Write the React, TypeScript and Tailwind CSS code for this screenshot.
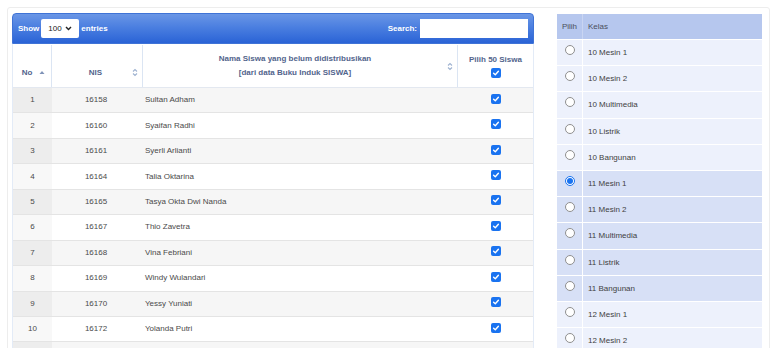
import React from "react";

const students: [number, string, string][] = [
  [1, "16158", "Sultan Adham"],
  [2, "16160", "Syaifan Radhi"],
  [3, "16161", "Syerli Arlianti"],
  [4, "16164", "Talia Oktarina"],
  [5, "16165", "Tasya Okta Dwi Nanda"],
  [6, "16167", "Thio Zavetra"],
  [7, "16168", "Vina Febriani"],
  [8, "16169", "Windy Wulandari"],
  [9, "16170", "Yessy Yuniati"],
  [10, "16172", "Yolanda Putri"],
];

const kelas: [string, boolean, boolean][] = [
  ["10 Mesin 1", false, false],
  ["10 Mesin 2", false, false],
  ["10 Multimedia", false, false],
  ["10 Listrik", false, false],
  ["10 Bangunan", false, false],
  ["11 Mesin 1", true, true],
  ["11 Mesin 2", false, true],
  ["11 Multimedia", false, true],
  ["11 Listrik", false, true],
  ["11 Bangunan", false, true],
  ["12 Mesin 1", false, false],
  ["12 Mesin 2", false, false],
];

function SortBoth() {
  return (
    <svg width="6" height="9" viewBox="0 0 6 9" className="shrink-0">
      <path d="M1 3.5 L3 1.5 L5 3.5" fill="none" stroke="#9fb3d1" strokeWidth="1.1" />
      <path d="M1 5.5 L3 7.5 L5 5.5" fill="none" stroke="#9fb3d1" strokeWidth="1.1" />
    </svg>
  );
}

function SortAsc() {
  return (
    <svg width="6" height="5" viewBox="0 0 6 5" className="shrink-0">
      <path d="M0.5 4 L3 1 L5.5 4 Z" fill="#7f93b8" />
    </svg>
  );
}

function Check() {
  return (
    <span className="inline-flex h-[10px] w-[10px] items-center justify-center rounded-[2px] bg-[#1a73f0]">
      <svg width="8" height="8" viewBox="0 0 8 8">
        <path d="M1.6 4.2 L3.3 5.8 L6.4 2.2" fill="none" stroke="white" strokeWidth="1.4" strokeLinecap="round" strokeLinejoin="round" />
      </svg>
    </span>
  );
}

function Radio({ on }: { on: boolean }) {
  return on ? (
    <span className="inline-flex h-[10px] w-[10px] items-center justify-center rounded-full border border-[#1a73f0] bg-white">
      <span className="h-[6px] w-[6px] rounded-full bg-[#1a73f0]" />
    </span>
  ) : (
    <span className="inline-block h-[10px] w-[10px] rounded-full border border-[#8f8f8f] bg-white" />
  );
}

export default function App() {
  return (
    <div className="h-[348px] w-[773px] overflow-hidden bg-white font-['Liberation_Sans',Arial,sans-serif] text-[8px]">
      <div className="ml-[7px] mt-[7px] flex w-[763px] items-start gap-[23px] rounded-t-[3px] border border-[#ededed] pl-[4px] pt-[5px] pb-[10px]">
        {/* Left table */}
        <div className="flex w-[522px] shrink-0 flex-col">
          <div className="flex h-[31px] shrink-0 items-center justify-between rounded-t-[4px] border border-[#3f73d6] bg-[linear-gradient(#6a96e6,#4b7fe0_45%,#2a63d6)] px-[5px] text-white">
            <div className="flex items-center gap-[2px] font-bold">
              <span>Show</span>
              <div className="flex h-[19px] w-[38px] items-center justify-between rounded-[2px] bg-white px-[7px] text-[8px] font-normal text-[#222]">
                <span>100</span>
                <svg width="7" height="5" viewBox="0 0 7 5">
                  <path d="M1 1 L3.5 3.6 L6 1" fill="none" stroke="#222" strokeWidth="1.4" />
                </svg>
              </div>
              <span>entries</span>
            </div>
            <div className="flex items-center gap-[3px] font-bold">
              <span>Search:</span>
              <div className="h-[19px] w-[108px] bg-white" />
            </div>
          </div>
          <div className="shrink-0 border-x border-[#e3ebf7]">
            {/* header */}
            <div className="flex h-[44px] border-b border-[#e3e8f0] pt-[1px] font-bold text-[#52648c]">
              <div className="flex w-[39px] items-center justify-center gap-[7px] border-r border-[#dbe5f3] pt-[13px] pl-[3px]">
                <span>No</span>
                <SortAsc />
              </div>
              <div className="flex w-[91px] items-center justify-end border-r border-[#dbe5f3] pt-[13px] pr-[4px]">
                <span className="mr-[30px]">NIS</span>
                <SortBoth />
              </div>
              <div className="flex w-[315px] items-center border-r border-[#dbe5f3] pr-[4px]">
                <div className="flex flex-1 flex-col items-center gap-[4px] leading-[10px]">
                  <span>Nama Siswa yang belum didistribusikan</span>
                  <span>[dari data Buku Induk SISWA]</span>
                </div>
                <SortBoth />
              </div>
              <div className="flex flex-1 flex-col items-center justify-center gap-[3px] leading-[10px]">
                <span>Pilih 50 Siswa</span>
                <Check />
              </div>
            </div>
            {/* rows */}
            {students.map(([no, nis, name], i) => {
              const odd = i % 2 === 0;
              return (
                <div
                  key={no}
                  className={`flex h-[25.45px] border-b border-[#e4e4e4] text-[#4a4a4a] ${odd ? "bg-[#f6f6f6]" : "bg-white"}`}
                >
                  <div className={`flex w-[39px] items-center justify-center ${odd ? "bg-[#ededed]" : "bg-[#f8f8f8]"}`}>{no}</div>
                  <div className="flex w-[91px] items-center justify-center pr-[3px]">{nis}</div>
                  <div className="flex w-[315px] items-center pl-[2px]">{name}</div>
                  <div className="flex flex-1 items-center justify-center pb-[3px]">
                    <Check />
                  </div>
                </div>
              );
            })}
            <div className="flex h-[25.45px] bg-[#f6f6f6]">
              <div className="w-[39px] bg-[#ededed]" />
              <div className="w-[91px]" />
              <div className="w-[315px]" />
              <div className="flex flex-1 items-start justify-center pt-[6px]">
                <Check />
              </div>
            </div>
          </div>
        </div>
        {/* Right table */}
        <div className="flex w-[205px] shrink-0 flex-col pt-[1px]">
          <div className="flex h-[25px] bg-[#b6c7ee] text-[#4a4f5c]">
            <div className="flex w-[26px] items-center justify-center border-r border-[#c9d5f2]">Pilih</div>
            <div className="flex flex-1 items-center pl-[5px]">Kelas</div>
          </div>
          {kelas.map(([k, on, dark]) => (
            <div
              key={k}
              className={`flex h-[26.2px] border-t border-white text-[#3f3f3f] ${dark ? "bg-[#d7e0f6]" : "bg-[#edf1fc]"}`}
            >
              <div className="flex w-[26px] items-start justify-center border-r border-white pt-[5px]">
                <Radio on={on} />
              </div>
              <div className="flex flex-1 items-center pl-[5px] pt-[1px]">{k}</div>
            </div>
          ))}
        </div>
      </div>
    </div>
  );
}
